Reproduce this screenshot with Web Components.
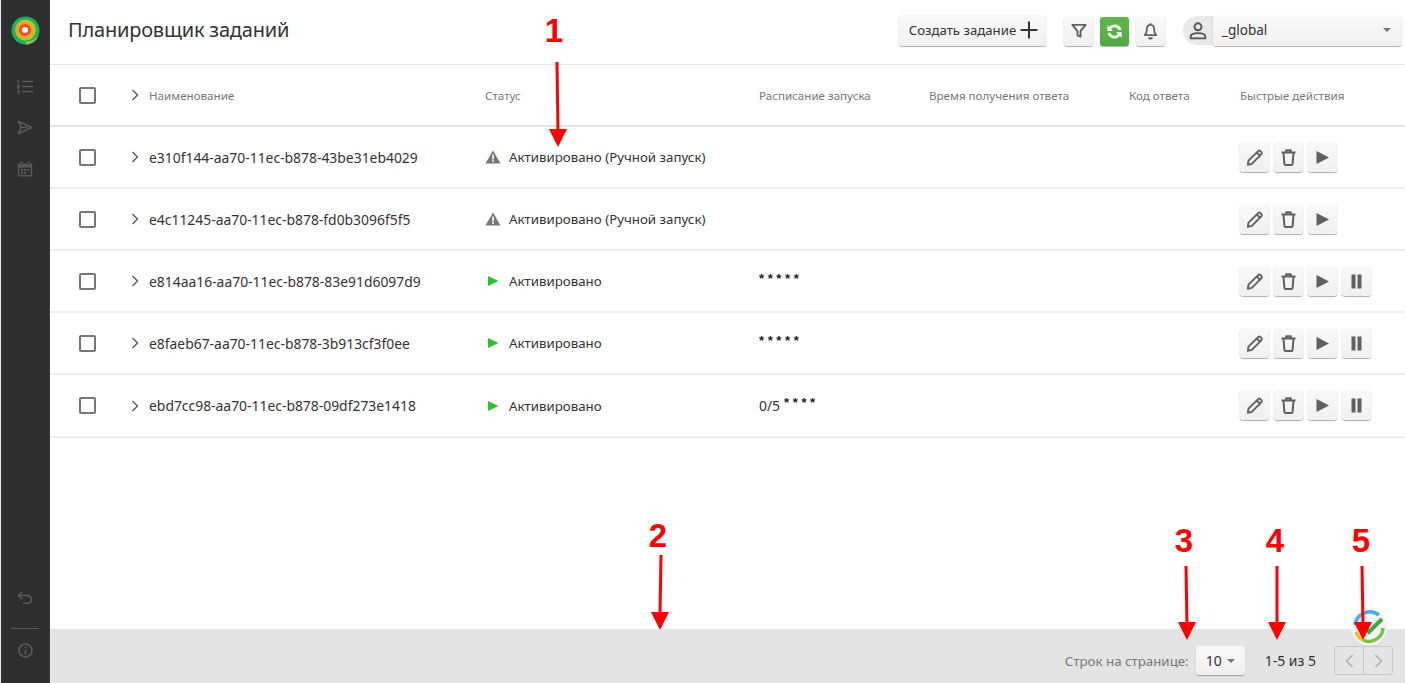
<!DOCTYPE html>
<html lang="ru">
<head>
<meta charset="utf-8">
<title>Планировщик заданий</title>
<style>
  html, body { margin: 0; height: 100%; overflow: hidden; }
  body { font: 13px "Noto Sans", "Open Sans", sans-serif; color: #333; background: #fff; }
</style>
</head>
<body>
<app-shell>
  <app-sidebar slot="side"></app-sidebar>
  <app-header slot="head" title="Планировщик заданий"></app-header>
  <task-table slot="main">
    <task-row name="e310f144-aa70-11ec-b878-43be31eb4029" status="warn" label="Активировано (Ручной запуск)" actions="3"></task-row>
    <task-row name="e4c11245-aa70-11ec-b878-fd0b3096f5f5" status="warn" label="Активировано (Ручной запуск)" actions="3"></task-row>
    <task-row name="e814aa16-aa70-11ec-b878-83e91d6097d9" status="ok" label="Активировано" cron="* * * * *" actions="4"></task-row>
    <task-row name="e8faeb67-aa70-11ec-b878-3b913cf3f0ee" status="ok" label="Активировано" cron="* * * * *" actions="4"></task-row>
    <task-row name="ebd7cc98-aa70-11ec-b878-09df273e1418" status="ok" label="Активировано" prefix="0/5" cron="* * * *" actions="4" last></task-row>
  </task-table>
  <app-footer slot="foot"></app-footer>
</app-shell>
<red-marks></red-marks>

<script>
const ICONS = {
  pencil: '<path d="M3.500 12.700 2.800 16.800l4-.9L16.300 6.300a1.700 1.700 0 0 0 0-2.400l-.8-.8a1.700 1.700 0 0 0-2.400 0zM11.800 4.500l3 3" fill="none" stroke="currentColor" stroke-width="1.900" stroke-linejoin="round"/>',
  trash: '<path d="M2.500 4.400h14M7.200 4.200V2.200h4.600v2M4.500 4.800l.9 11c0 .8.500 1.300 1.300 1.300h5.600c.8 0 1.300-.5 1.300-1.300l.9-11" fill="none" stroke="currentColor" stroke-width="2" stroke-linejoin="round"/>',
  play: '<path d="M3.500 3 16 9.500 3.500 16z" fill="currentColor"/>',
  pause: '<path d="M4.500 2.500h4v14h-4zM10.500 2.500h4v14h-4z" fill="currentColor"/>',
  filter: '<path d="M2.500 3h14l-5.400 6.600v6l-3.200-1.700V9.600z" fill="none" stroke="currentColor" stroke-width="2" stroke-linejoin="round"/>',
  bell: '<path d="M9.500 2.800c-2.500 0-3.600 2-3.600 4.200 0 3.200-.7 4.700-2 6.200h11.200c-1.300-1.500-2-3-2-6.200 0-2.200-1.100-4.200-3.600-4.200zM7.800 15.400c.3.900 1 1.300 1.700 1.300s1.400-.4 1.700-1.300M9.500 1.300v1.500" fill="none" stroke="currentColor" stroke-width="1.800" stroke-linejoin="round"/>',
  sync: '<path d="M16.500 7.900A7.200 7.200 0 0 0 4 5L2.300 3.300V9h5.800L6.100 7.100a4.300 4.300 0 0 1 7.500 1.100zM2.500 11.100A7.200 7.200 0 0 0 15 14l1.700 1.700V10h-5.800l2 1.900a4.300 4.300 0 0 1-7.500-1.100z" fill="currentColor"/>',
  user: '<circle cx="9.500" cy="5.500" r="3.300" fill="none" stroke="currentColor" stroke-width="1.800"/><path d="M2.500 16.500v-1.600c0-2 2.200-3.400 7-3.400s7 1.400 7 3.400v1.600z" fill="none" stroke="currentColor" stroke-width="1.800" stroke-linejoin="round"/>',
  plus: '<path d="M9.500 1.500v16M1.500 9.500h16" fill="none" stroke="currentColor" stroke-width="1.900"/>'
};
function icon(name, size) {
  return `<svg width="${size}" height="${size}" viewBox="0 0 19 19" aria-hidden="true">${ICONS[name]}</svg>`;
}

class AppShell extends HTMLElement {
  constructor() {
    super();
    this.attachShadow({ mode: "open" }).innerHTML = `
      <style>
        :host { display: grid; grid-template-columns: 50px 1fr; grid-template-rows: 65px 1fr 54px; height: 683px; }
        .side { grid-row: 1 / 4; display: flex; }
      </style>
      <div class="side"><slot name="side"></slot></div>
      <slot name="head"></slot>
      <slot name="main"></slot>
      <slot name="foot"></slot>`;
  }
}

class AppSidebar extends HTMLElement {
  constructor() {
    super();
    this.attachShadow({ mode: "open" }).innerHTML = `
      <style>
        :host { display: flex; flex-direction: column; align-items: center; width: 48px; background: #2e2e2e; border-left: 1px solid #e8e8e8; border-right: 1px solid #3a3a3a; color: #5a5a5a; }
        .logo { margin-top: 16px; height: 29px; }
        .nav { display: flex; flex-direction: column; align-items: center; gap: 26px; margin-top: 34px; }
        .bottom { margin-top: auto; display: flex; flex-direction: column; align-items: center; padding-bottom: 25px; }
        hr { width: 28px; height: 1px; border: 0; background: #585858; margin: 23px 0 14px; }
        svg { display: block; }
      </style>
      <div class="logo">
        <svg width="29" height="29" viewBox="0 0 29 29">
          <circle cx="14.500" cy="14.500" r="14" fill="#1fae5c"/>
          <path d="M14.500 28.500A14 14 0 0 0 28.500 14.500c0 6-3 7-6 9-2 1.300-4 1.500-8 2z" fill="#8fc43c"/>
          <circle cx="14.500" cy="14" r="10.500" fill="#a6c92f"/>
          <circle cx="14" cy="14" r="8.500" fill="#f7a11b"/>
          <circle cx="14" cy="14" r="6" fill="#ee4d2a"/>
          <circle cx="14" cy="14" r="3" fill="#fff"/>
        </svg>
      </div>
      <div class="nav">
        <svg width="17" height="15" viewBox="0 0 17 15" fill="none" stroke="currentColor" stroke-width="1.500">
          <path d="M5 2.500h11M5 7.500h11M5 12.500h11M1 .5v3M0 6.500h2v1.500H0v1.500h2M0 12h2v3H0"/>
        </svg>
        <svg width="16" height="15" viewBox="0 0 16 15" fill="none" stroke="currentColor" stroke-width="1.600" stroke-linejoin="round">
          <path d="M1.500 1.500 14.500 7.500 1.500 13.500 4 7.500zM4 7.500h6"/>
        </svg>
        <svg width="16" height="16" viewBox="0 0 16 16" fill="currentColor">
          <path d="M.8 2.500h14.400v13H.8zM2.300 6.500v7.500h11.400V6.500zM3.500 .5h2v3.500h-2zM10.500 .5h2v3.500h-2zM4 8h2v2H4zM7 8h2v2H7zM10 8h2v2h-2zM4 11h2v2H4zM7 11h2v2H7z" fill-rule="evenodd"/>
        </svg>
      </div>
      <div class="bottom">
        <svg width="16" height="14" viewBox="0 0 16 14" fill="none" stroke="currentColor" stroke-width="1.600">
          <path d="M5 1 1.500 4.500 5 8M1.500 4.500h9a3.800 3.800 0 0 1 0 7.800H6"/>
        </svg>
        <hr>
        <svg width="15" height="15" viewBox="0 0 15 15">
          <circle cx="7.500" cy="7.500" r="6.500" fill="none" stroke="currentColor" stroke-width="1.600"/>
          <path d="M6.700 6.500h1.600v5H6.700zM6.700 3.500h1.600v1.700H6.700z" fill="currentColor"/>
        </svg>
      </div>`;
  }
}

class ToolButton extends HTMLElement {
  constructor() {
    super();
    this.attachShadow({ mode: "open" }).innerHTML = `
      <style>
        :host { display: inline-flex; align-items: center; justify-content: center; box-sizing: border-box; height: 29px; min-width: 29px; border-radius: 3px; background: linear-gradient(#f9f9f9, #f0f0f0); box-shadow: 0 1px 1px rgba(0,0,0,.3), 0 0 1px rgba(0,0,0,.3); color: #606060; }
        :host([green]) { background: linear-gradient(#5fb64d, #53a843); color: #f0f7ee; }
        svg { display: block; }
      </style>
      <slot></slot>`;
    if (this.hasAttribute("icon")) {
      const size = this.getAttribute("size") || 19;
      this.shadowRoot.innerHTML += icon(this.getAttribute("icon"), size);
    }
  }
}

class AppHeader extends HTMLElement {
  constructor() {
    super();
    this.attachShadow({ mode: "open" }).innerHTML = `
      <style>
        :host { display: flex; align-items: center; box-sizing: border-box; height: 65px; padding: 1px 3px 3px 18px; border-bottom: 1px solid #e6e6e6; }
        h1 { margin: 0 0 2px; font: 400 20px/30px "Noto Sans", sans-serif; color: #333; letter-spacing: -.2px; flex: 1; }
        .create { width: 147px; height: 30px; gap: 3px; padding: 0 0 2px 3px; font-size: 13.200px; color: #333; }
        .tools { display: flex; gap: 7px; margin-left: 18px; }
        .user { display: flex; margin-left: 18px; }
        .avatar { display: flex; align-items: center; justify-content: center; width: 30px; height: 29px; border-radius: 15px 0 0 15px; background: #e9e9e9; color: #555; }
        .select { display: flex; align-items: center; justify-content: space-between; box-sizing: border-box; width: 189px; height: 30px; padding: 0 11px 2px 9px; border-radius: 3px; background: linear-gradient(#f9f9f9, #f0f0f0); box-shadow: 0 1px 1px rgba(0,0,0,.3), 0 0 1px rgba(0,0,0,.2); font-size: 13.500px; }
        .caret { width: 0; height: 0; border: 4px solid transparent; border-top: 4px solid #777; border-bottom: 0; }
      </style>
      <h1></h1>
      <tool-button class="create">Создать задание ${icon("plus", 20)}</tool-button>
      <div class="tools">
        <tool-button icon="filter" size="18"></tool-button>
        <tool-button icon="sync" green></tool-button>
        <tool-button icon="bell" size="19"></tool-button>
      </div>
      <div class="user">
        <div class="avatar">${icon("user", 20)}</div>
        <div class="select"><span>_global</span><span class="caret"></span></div>
      </div>`;
    this.shadowRoot.querySelector("h1").textContent = this.getAttribute("title");
  }
}

const GRID = "81px 354px 274px 170px 200px 111px 1fr";

class CheckBox extends HTMLElement {
  constructor() {
    super();
    this.attachShadow({ mode: "open" }).innerHTML = `
      <style>
        :host { display: block; box-sizing: border-box; width: 17px; height: 17px; margin-left: 29px; border: 2px solid #777; border-radius: 2px; }
      </style>`;
  }
}

class TaskTable extends HTMLElement {
  constructor() {
    super();
    this.attachShadow({ mode: "open" }).innerHTML = `
      <style>
        :host { display: block; }
        .head { display: grid; grid-template-columns: ${GRID}; align-items: center; height: 62px; box-sizing: border-box; border-bottom: 2px solid #e3e3e3; font-size: 11.600px; color: #777; }
        .first { display: flex; align-items: center; gap: 10px; }
        svg { display: block; }
      </style>
      <div class="head">
        <check-box></check-box>
        <div class="first">
          <svg width="8" height="12" viewBox="0 0 8 12" fill="none" stroke="#555" stroke-width="1.300"><path d="M1.500 1 6.500 6l-5 5"/></svg>
          <span>Наименование</span>
        </div>
        <span>Статус</span>
        <span>Расписание запуска</span>
        <span>Время получения ответа</span>
        <span>Код ответа</span>
        <span>Быстрые действия</span>
      </div>
      <slot></slot>`;
  }
}

class TaskRow extends HTMLElement {
  constructor() {
    super();
    const warn = this.getAttribute("status") === "warn";
    const statusIcon = warn
      ? `<svg width="16" height="14" viewBox="0 0 16 14"><path d="M8 .5 15.500 13.500H.5z" fill="#777"/><path d="M7.200 4.500h1.600v5H7.200zM7.200 10.300h1.600v1.700H7.200z" fill="#fff"/></svg>`
      : `<svg width="16" height="12" viewBox="0 0 16 12"><path d="M3 1 13.500 6 3 11z" fill="#2fc22f"/></svg>`;
    const names = ["pencil", "trash", "play", "pause"].slice(0, +this.getAttribute("actions"));
    const prefix = this.getAttribute("prefix") || "";
    const cron = this.getAttribute("cron") || "";
    this.attachShadow({ mode: "open" }).innerHTML = `
      <style>
        :host { display: grid; grid-template-columns: ${GRID}; align-items: center; box-sizing: border-box; height: 62px; border-bottom: 2px solid #eeeeee; font-size: 13.900px; color: #333; }
        :host([last]) { height: 63px; }
        .first { display: flex; align-items: center; gap: 10px; }
        .status { display: flex; align-items: center; gap: 8px; font-size: 13.300px; }
        .cron { align-self: start; margin-top: 18px; line-height: 20px; white-space: nowrap; display: flex; align-items: flex-start; gap: 4px; }
        .cron i { font-style: normal; margin-top: 3px; }
        .cron b { font: 700 13px/20px "Liberation Sans", sans-serif; color: #222; }
        .actions { display: flex; gap: 5px; }
        svg { display: block; }
      </style>
      <check-box></check-box>
      <div class="first">
        <svg width="8" height="12" viewBox="0 0 8 12" fill="none" stroke="#555" stroke-width="1.300"><path d="M1.500 1 6.500 6l-5 5"/></svg>
        <span>${this.getAttribute("name")}</span>
      </div>
      <div class="status">${statusIcon}<span>${this.getAttribute("label")}</span></div>
      <span class="cron">${prefix ? `<i>${prefix}</i>` : ""}<b>${cron}</b></span>
      <span></span><span></span>
      <div class="actions">${names.map(n => `<tool-button icon="${n}"></tool-button>`).join("")}</div>`;
  }
}

class AppFooter extends HTMLElement {
  constructor() {
    super();
    this.attachShadow({ mode: "open" }).innerHTML = `
      <style>
        :host { display: flex; align-items: center; justify-content: flex-end; height: 54px; box-sizing: border-box; padding: 9px 12px 0 0; background: #e4e4e4; font-size: 13.300px; color: #333; }
        .label { color: #777; margin-right: 7px; }
        .size { display: flex; align-items: center; justify-content: center; gap: 5px; width: 49px; height: 29px; border-radius: 3px; background: linear-gradient(#f9f9f9, #f0f0f0); box-shadow: 0 1px 1px rgba(0,0,0,.3); font-size: 14px; }
        .caret { width: 0; height: 0; border: 4px solid transparent; border-top: 4px solid #777; border-bottom: 0; }
        .range { margin: 0 18px 0 20px; font-size: 14px; }
        .pager { display: flex; box-sizing: border-box; width: 59px; height: 29px; border: 1px solid #c9c9c9; border-radius: 3px; }
        .pager span { flex: 1; display: flex; align-items: center; justify-content: center; }
        .pager span + span { border-left: 1px solid #c9c9c9; }
        svg { display: block; }
      </style>
      <span class="label">Строк на странице:</span>
      <div class="size"><span>10</span><span class="caret"></span></div>
      <span class="range">1-5 из 5</span>
      <div class="pager">
        <span><svg width="9" height="14" viewBox="0 0 9 14" fill="none" stroke="#aaa" stroke-width="1.400"><path d="M7.500 1 1.500 7l6 6"/></svg></span>
        <span><svg width="9" height="14" viewBox="0 0 9 14" fill="none" stroke="#aaa" stroke-width="1.400"><path d="M1.500 1l6 6-6 6"/></svg></span>
      </div>`;
  }
}

// red annotations and the floating badge lie over the page
class RedMarks extends HTMLElement {
  constructor() {
    super();
    const arrows = [
      [557, 62, 558, 147, "1", 554, 16],
      [661, 555, 660, 630, "2", 658, 521],
      [1186, 566, 1187, 640, "3", 1184, 526],
      [1277, 566, 1277, 640, "4", 1275, 526],
      [1362, 566, 1363, 640, "5", 1361, 526]
    ];
    const lines = arrows.map(a => {
      const [x1, y1, x2, y2] = a;
      return `<path d="M${x1} ${y1}L${x2} ${y2 - 16}" stroke="#f00" stroke-width="3" fill="none"/><path d="M${x2 - 9} ${y2 - 18}H${x2 + 9}L${x2} ${y2}z" fill="#f00"/>`;
    }).join("");
    const nums = arrows.map(a => `<span style="left:${a[5] - 20}px;top:${a[6]}px">${a[4]}</span>`).join("");
    this.attachShadow({ mode: "open" }).innerHTML = `
      <style>
        :host { position: absolute; left: 0; top: 0; width: 1405px; height: 683px; pointer-events: none; }
        span { position: absolute; width: 40px; text-align: center; font: 700 33px/30px "Liberation Sans", sans-serif; color: #f00; }
        svg { position: absolute; left: 0; top: 0; }
      </style>
      <svg width="1405" height="683" viewBox="0 0 1405 683">
        <circle cx="1369" cy="627" r="18" fill="#f4f4f4"/>
        <path d="M1355 625a15 15 0 0 1 24-10" fill="none" stroke="#3fb0e8" stroke-width="3.500"/>
        <path d="M1356 632a14 14 0 0 0 7 8" fill="none" stroke="#e6c520" stroke-width="3.500"/>
        <path d="M1363 640a14 14 0 0 0 20-12" fill="none" stroke="#7cc242" stroke-width="3.500"/>
        <path d="M1364 627l5 5 13-13" fill="none" stroke="#3da84a" stroke-width="4"/>
        ${lines}
      </svg>
      ${nums}`;
  }
}

customElements.define("tool-button", ToolButton);
customElements.define("check-box", CheckBox);
customElements.define("app-sidebar", AppSidebar);
customElements.define("app-header", AppHeader);
customElements.define("task-table", TaskTable);
customElements.define("task-row", TaskRow);
customElements.define("app-footer", AppFooter);
customElements.define("red-marks", RedMarks);
customElements.define("app-shell", AppShell);
</script>
</body>
</html>
